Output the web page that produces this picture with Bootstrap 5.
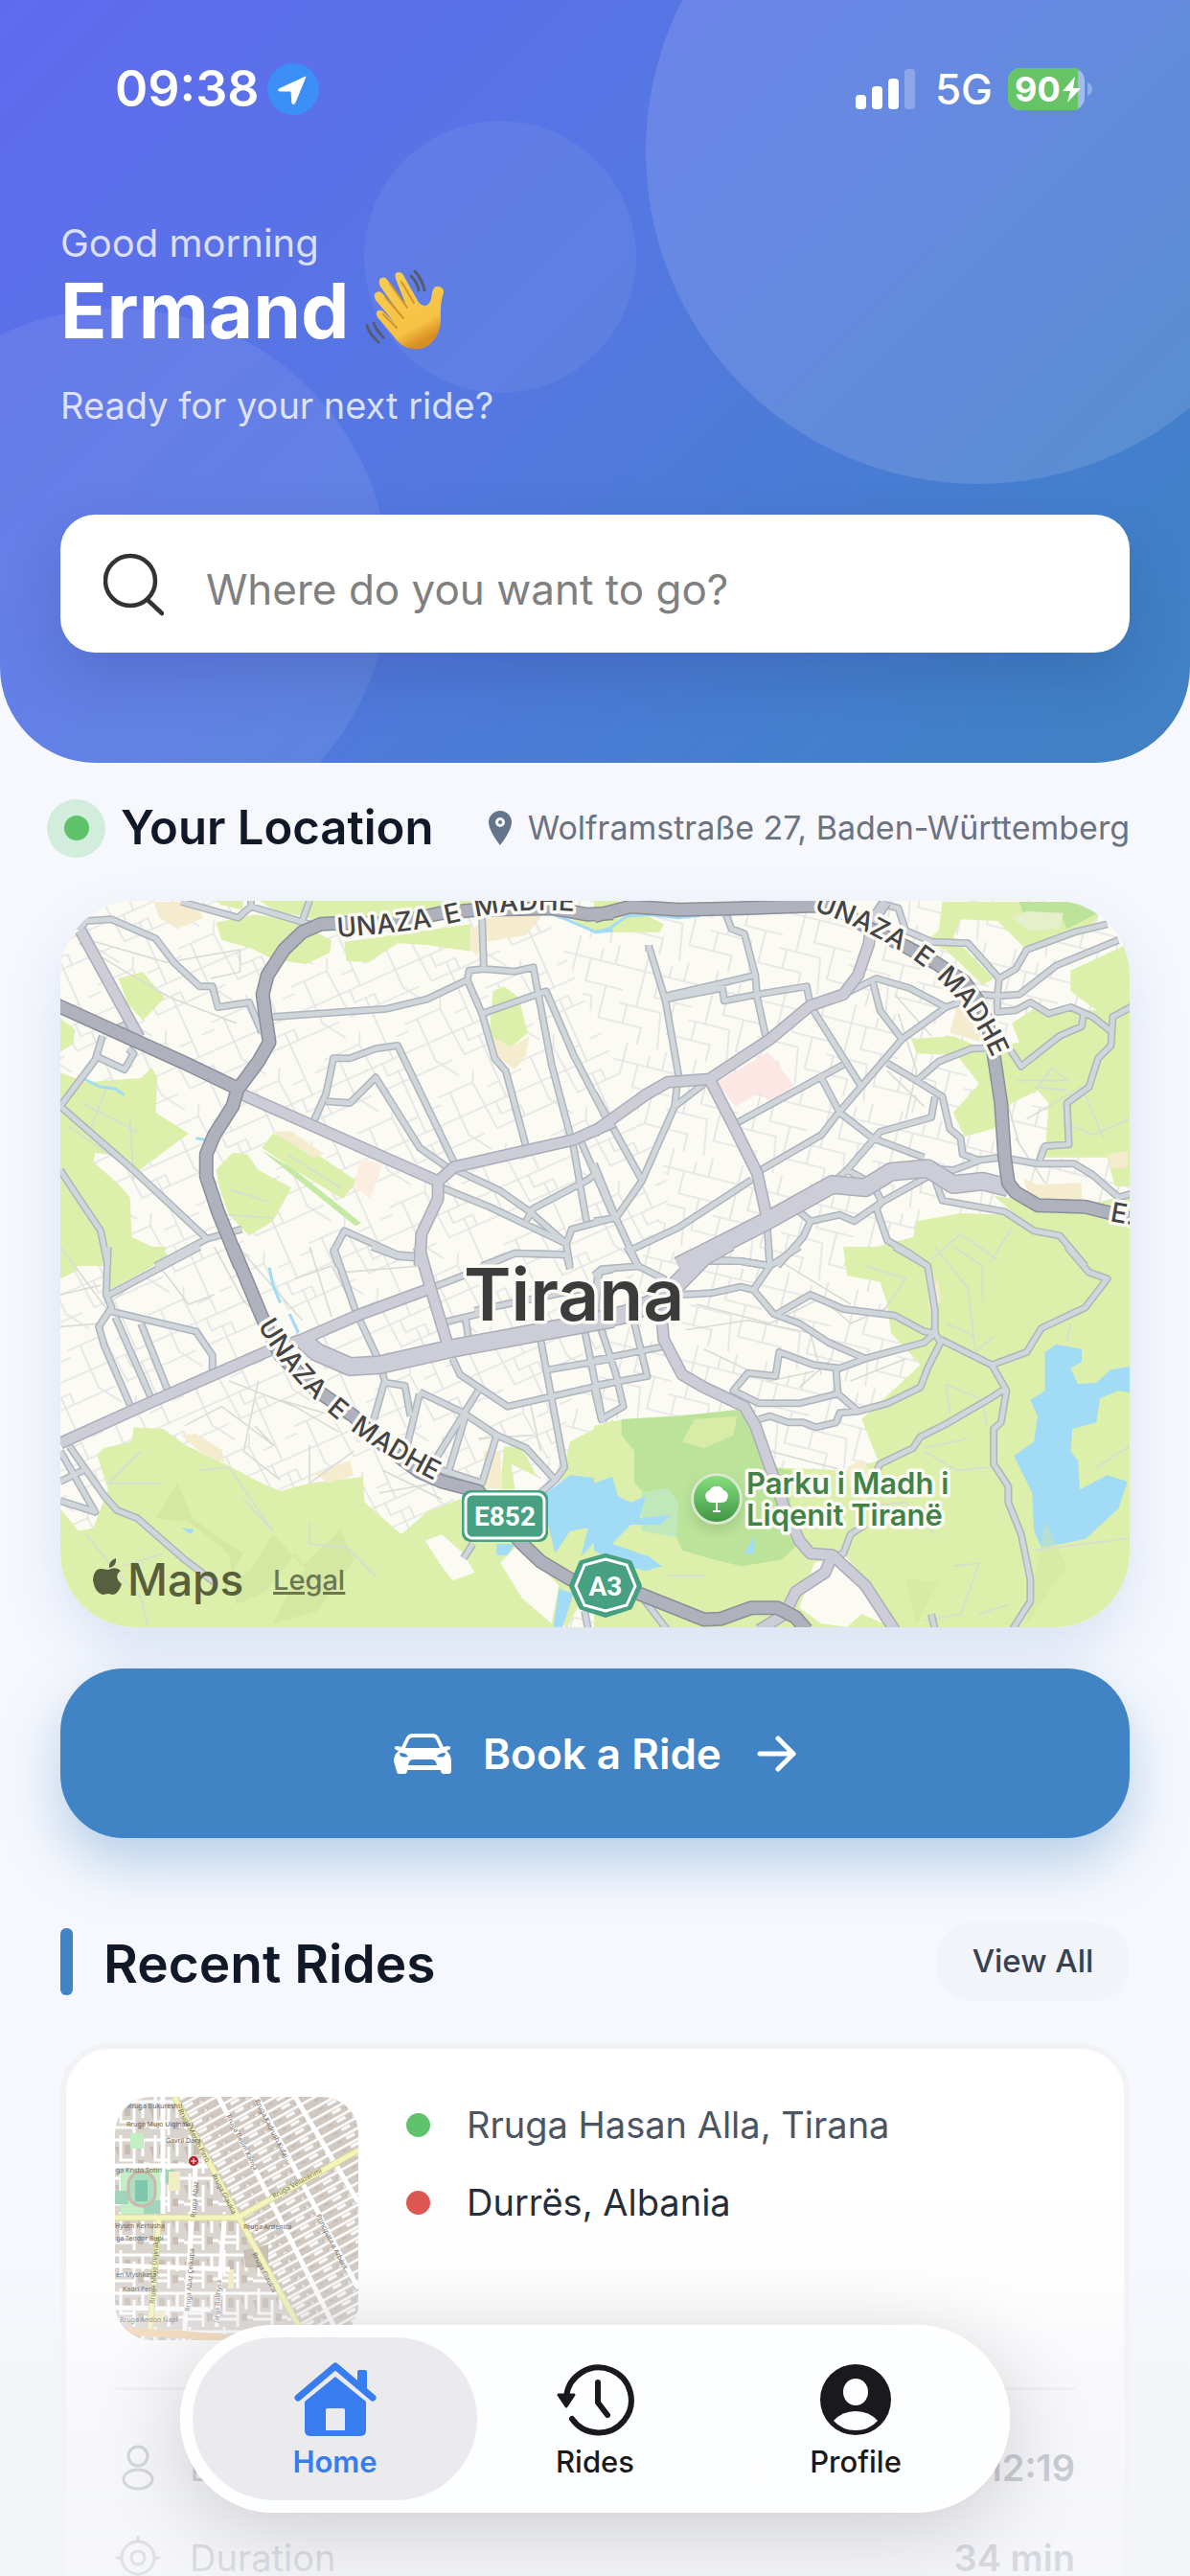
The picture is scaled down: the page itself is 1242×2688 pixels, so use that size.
<!DOCTYPE html>
<html lang="en">
<head>
<meta charset="utf-8">
<meta name="viewport" content="width=device-width, initial-scale=1">
<title>Home</title>
<link href="https://cdn.jsdelivr.net/npm/bootstrap@5.3.0/dist/css/bootstrap.min.css" rel="stylesheet">
<style>
body{font-family:Inter,"Liberation Sans",sans-serif;background:#f7f8fd;color:#111827}
.app{height:100vh;min-height:1400px;overflow:hidden;position:relative}
.gutter{padding-left:63px;padding-right:63px}
.hero{height:796px;border-radius:0 0 100px 100px;background:linear-gradient(135deg,#606aee 0%,#5478e2 45%,#4180c8 88%,#4181c2 100%);overflow:hidden;position:relative;color:#fff}
.orb{position:absolute;border-radius:50%;background:rgba(255,255,255,.1)}
.orb-a{width:694px;height:694px;right:-126px;top:-189px;background:rgba(255,255,255,.12)}
.orb-b{width:284px;height:284px;left:380px;top:126px;background:rgba(255,255,255,.06)}
.orb-c{width:568px;height:568px;left:-162px;top:322px;background:rgba(255,255,255,.08)}
.hero-body{position:relative}
.status{height:186px;padding:0 102px 0 120px}
.clock{font-size:52px;font-weight:600}
.net{font-size:44px;font-weight:500}
.greet{font-size:40px;line-height:48px;margin-top:44px;color:rgba(255,255,255,.78)}
.hero-name{font-size:80px;line-height:92px;font-weight:700;gap:18px}
.ready{font-size:38px;line-height:48px;margin-top:29px;color:rgba(255,255,255,.78)}
.search{height:144px;margin-top:90px;border-radius:36px;background:#fff;padding:0 45px;gap:42px;box-shadow:0 24px 60px rgba(30,40,90,.18)}
.search input{border:0;outline:0;background:transparent;font-size:44px;color:#333;height:100px;margin-top:12px}
.search input::placeholder{color:#808080;opacity:1}
.search svg{margin-top:2px}
.loc-row{height:136px;margin-left:-14px}
.halo{width:61px;height:61px;border-radius:50%;background:#d3eddd}
.halo i{width:26px;height:26px;border-radius:50%;background:#5fc36b}
.title-a{font-size:49px;font-weight:600;line-height:60px}
.address{font-size:34px;color:#6b7280;line-height:44px}
.map-box{height:758px;margin-top:8px;border-radius:78px;overflow:hidden;background:#fbfaf3}
.map-wrap{box-shadow:0 24px 60px rgba(65,120,190,.16);border-radius:78px}
.map-box svg{width:100%;height:100%;display:block}
.ln path{fill:none;vector-effect:non-scaling-stroke;stroke-linejoin:round;stroke-linecap:butt}
.halo-text{paint-order:stroke;stroke:#fbfaf5;stroke-width:7px;stroke-linejoin:round}
.book{height:177px;margin-top:43px;border:0;border-radius:66px;background:#4184c5;color:#fff;font-size:44px;font-weight:600;gap:33px;box-shadow:0 26px 60px rgba(65,132,197,.36)}
.book:hover{background:#3b7ab8;color:#fff}
.recent{margin-top:88px;height:82px}
.recent .stripe{width:13px;height:70px;border-radius:6px;background:#4184c5}
.title-b{font-size:55px;font-weight:600;line-height:66px;padding-top:3px}
.view-all{height:82px;width:202px;border:0;border-radius:38px;background:#f1f4f8;font-size:33px;font-weight:500;color:#374151}
.ride{margin-top:44px;border:6px solid #f1f3f6;border-radius:52px;background:#fff;padding:50px 51px 120px}
.thumb{width:254px;height:254px;border-radius:38px;overflow:hidden;flex:none}
.thumb svg{width:100%;height:100%;display:block}
.stops{padding-left:50px;padding-top:4px}
.stop{height:50px;margin-bottom:31px;font-size:38px;gap:38px;color:#4b5563}
.stop i{width:25px;height:25px;border-radius:50%;background:#5fc36b}
.stop.to{color:#1f2937}
.stop.to i{background:#dc534d}
.facts{border-top:3px solid #eceef1;margin-top:49px;padding-top:56px}
.fact{height:50px;margin-bottom:44px;font-size:38px;color:#7d8290}
.fact svg{width:50px;margin-right:29px;margin-left:-1px}
.fact strong{font-weight:600;color:#6b7080}
.fade-veil{position:absolute;left:0;right:0;bottom:0;height:460px;pointer-events:none;background:linear-gradient(rgba(243,244,248,0) 0%,rgba(243,244,248,.05) 30%,rgba(243,244,248,.6) 55%,rgba(243,244,248,.82) 100%)}
.tabs{position:absolute;bottom:66px;left:50%;transform:translateX(-50%);width:866px;height:196px;border-radius:98px;background:rgba(253,254,255,.97);border:3px solid #fff;box-shadow:0 18px 90px rgba(0,0,0,.17);padding:10px}
.tab{flex:0 0 272px;height:170px;border-radius:85px;color:#1a1a1c;text-decoration:none;font-size:31px;font-weight:500;line-height:40px;padding-top:5px;gap:6px}
.tab.on{background:#ebebed;color:#377df0;font-weight:600;flex:0 0 297px;margin-right:-13px}
</style>
</head>
<body>
<div class="app">
<header class="hero">
  <div class="orb orb-a"></div><div class="orb orb-b"></div><div class="orb orb-c"></div>
  <div class="hero-body">
    <div class="status d-flex align-items-center justify-content-between">
      <div class="d-flex align-items-center gap-2"><span class="clock">09:38</span>
        <svg width="54" height="54" viewBox="0 0 54 54"><circle cx="27" cy="27" r="27" fill="#3c8ff6"/><path d="M40 14 12 27q-1 2 1 2h12l1 13q2 2 3-1z" fill="#fff" stroke="#fff" stroke-width="1" stroke-linejoin="round"/></svg></div>
      <div class="d-flex align-items-center gap-3">
        <svg class="me-1" width="63" height="42" viewBox="0 0 63 42" fill="#fff"><rect y="27" width="11" height="15" rx="4"/><rect x="17" y="18" width="11" height="24" rx="4"/><rect x="34" y="10" width="11" height="32" rx="4"/><rect x="51" width="11" height="42" rx="4" opacity=".25"/></svg>
        <span class="net">5G</span>
        <svg width="88" height="44" viewBox="0 0 88 44"><rect width="80" height="44" rx="13" fill="#a3bde8"/><path d="M13 0H73V44H13A13 13 0 0 1 0 31V13A13 13 0 0 1 13 0z" fill="#66c466"/><path d="M83 15q5 2 5 7t-5 7z" fill="#8fb0e4"/><text x="7" y="35" font-size="36" font-weight="700" fill="#fff">90</text><path d="M70 9 57 24h8l-3 12L76 21h-8z" fill="#fff"/></svg>
      </div>
    </div>
    <div class="gutter">
      <div class="greet">Good morning</div>
      <div class="hero-name d-flex align-items-center"><span>Ermand</span>
        <svg width="84" height="84" viewBox="0 0 84 84"><defs><linearGradient id="skin" x1="0" y1="0" x2=".5" y2="1"><stop offset="0" stop-color="#f8cd55"/><stop offset=".8" stop-color="#f6c343"/><stop offset="1" stop-color="#d98e24"/></linearGradient></defs>
        <path d="M28 68 12 49q-3-5 1-7 4-1 7 3l10 10L10 31q-3-6 1-8 4-2 7 2l17 20L15 17q-3-7 1-9 4-2 7 3l19 26L31 9q-2-7 3-7 4 0 6 5l14 25q3 5 8 5 4-1 6-7 1-15 8-13 5 1 5 6-4 12-3 27 0 17-10 26-9 8-20 6-11-1-20-14z" fill="url(#skin)"/>
        <path d="m20 28 19 22M25 14l18 25M37 12l13 22M18 46l14 14" stroke="#cf962d" stroke-width="2" fill="none" stroke-linecap="round"/><path d="M51 1q8 9 10 20M47 6q7 7 8 15M8 55q3 8 10 15M1 58q3 9 12 17" stroke="#555b70" stroke-width="3" fill="none" stroke-linecap="round"/></svg></div>
      <div class="ready">Ready for your next ride?</div>
      <label class="search d-flex align-items-center" for="dest">
        <svg width="63" height="66" viewBox="0 0 63 66" fill="none" stroke="#333" stroke-width="4.5" stroke-linecap="round"><circle cx="28" cy="29" r="26"/><path d="m46 49 15 14"/></svg>
        <input class="flex-grow-1" id="dest" type="text" placeholder="Where do you want to go?" aria-label="Where do you want to go?">
      </label>
    </div>
  </div>
</header>
<main class="gutter">
  <div class="loc-row d-flex justify-content-between align-items-center">
    <div class="d-flex align-items-center">
      <span class="halo d-flex align-items-center justify-content-center"><i></i></span>
      <span class="title-a ps-3">Your Location</span>
    </div>
    <div class="d-flex align-items-center gap-3">
      <svg width="26" height="36" viewBox="0 0 26 36"><path d="M13 0A12 12 0 0 0 1 12c0 9 12 24 12 24s12-15 12-24A12 12 0 0 0 13 0zm0 17a5 5 0 1 1 0-10 5 5 0 0 1 0 10z" fill="#64748b"/><circle cx="13" cy="12" r="2" fill="#64748b"/></svg>
      <span class="address">Wolframstraße 27, Baden-Württemberg</span>
    </div>
  </div>
  <div class="map-wrap"><div class="map-box">
  <svg viewBox="0 0 1116 758" preserveAspectRatio="xMidYMid slice" role="img" aria-label="Map of Tirana">
  <defs>
    <pattern id="st1" width="92" height="84" patternUnits="userSpaceOnUse" patternTransform="rotate(-24)"><path d="M0 12H40L46 0M0 40H92M14 12V60L30 84M40 12 44 66H92M66 0V40M66 54V84M0 66H30M78 20H92M52 22H66M54 40V54H76V66" fill="none" stroke="#e3e3e5" stroke-width="1.6"/></pattern>
    <pattern id="st2" width="74" height="96" patternUnits="userSpaceOnUse" patternTransform="rotate(14)"><path d="M0 20H74M0 58H44L50 96M18 0V58M34 20V44H74M56 44V78H74M0 78H28V96M60 0V20M8 58V78M44 8V20" fill="none" stroke="#e3e3e5" stroke-width="1.6"/></pattern>
    <linearGradient id="pk" x1="0" y1="0" x2="0" y2="1"><stop stop-color="#86df7c"/><stop offset="1" stop-color="#429545"/></linearGradient>
    <filter id="soft" x="-20%" y="-20%" width="140%" height="140%"><feGaussianBlur stdDeviation="9"/></filter>
  </defs>
  <rect width="1116" height="758" fill="#fbfaf3"/>
  <path d="M0 0H500L640 300 430 758H0z" fill="url(#st1)"/><path d="M500 0H1116V758H430L640 300z" fill="url(#st2)"/>
  <!-- green, sand and water areas -->
  <g transform="translate(-23 -19) scale(.38265 .33333)">
    <path fill="#dcefab" d="M480 55H560L555 85 500 70zM600 55H1180V100L1060 125 960 130 780 125 720 105 650 90zM485 125 590 100 680 115 730 140 800 180 795 220 730 255 640 240 580 205 500 180zM835 185 1180 130V215L1060 195 980 190 900 250 840 245zM218 300 285 280 345 360 285 432 245 380zM60 425 100 460 95 505 60 530zM60 595 130 625 280 612 310 580 325 610 320 720 410 785 270 905 235 860 155 845 150 875 215 940 250 985 255 1110 350 1160 330 1200H60zM485 900 530 845 570 850 600 900 690 955 640 1060 575 1105 520 1040 495 960zM610 830 640 785 760 850 870 935 830 990 700 900zM1240 340 1270 325 1310 360 1335 470 1290 515 1230 480zM1450 110H1568V155L1500 145z"/>
    <path fill="#f5ecd0" d="M315 60H430L450 110 380 145 330 110zM640 780 690 778 780 850 750 860zM1180 150 1225 110 1380 95 1330 165 1220 185 1195 230 1175 200zM1230 480 1290 515 1340 480 1330 540 1300 585 1255 550z"/>
    <path fill="#fbeee1" d="M880 865 940 880 905 990 860 945z"/><path fill="#c4e9a2" d="M605 835 700 900 880 1065 865 1075 730 950z"/>
  </g>
  <g transform="translate(557 -19) scale(.38265 .33333)">
    <path fill="#dcefab" d="M0 55H60L190 130 180 155 0 155zM950 60H1400L1360 130 1180 210 1100 120 1000 115 980 170 1090 300 1060 320 960 210 900 190 940 150zM1300 275 1480 180V950L1420 950 1400 860 1230 860 1240 690 1210 650 1140 690 1090 770 1010 795 980 720 1050 630 990 540 880 535 865 490 980 480 1060 520 1160 500 1140 440 1200 395 1370 400 1300 340zM1380 1000 1480 970V1200H680L690 1165 870 1110 880 1060 1000 1035 1150 1040 1090 980 1200 1000z"/>
    <path fill="#bce39a" d="M1160 60H1300L1400 80 1290 145 1270 95H1170z"/><path fill="#e6efcb" d="M1140 110 1180 90 1280 95 1270 145 1190 150z"/>
    <path fill="#f5ecd0" d="M990 390 1030 380 1060 500 970 470zM1170 925 1210 945 1330 940V990L1190 990zM1400 850 1455 840V890L1410 895z"/>
    <path fill="#fce7e5" d="M335 625 475 530 545 635 480 685 450 660 385 700z"/>
  </g>
  <g transform="translate(-23 361) scale(.38265 .33333)">
    <path fill="#dcefab" d="M60 0H110L105 75 60 100zM195 0H350L330 50 195 135zM260 565 340 570 400 620 510 680 600 735 660 765 740 740 885 720 890 800 990 900 1060 830 1150 790 1280 850 1420 1060 1420 1200H60V820L110 890 150 880 190 760 160 650 180 630 255 610zM1270 625 1320 630 1360 720 1290 680 1300 760 1260 760zM1450 610 1568 540V900L1440 1200 1360 1000 1300 920 1400 860z"/>
    <path fill="#cde19b" opacity=".5" d="M380 740 420 850 480 900 560 960 500 1080 580 1010 640 900 720 1000 830 880 790 1100 700 960 620 1080 540 1120 520 960 410 860 320 850zM700 1040 830 900 860 980 760 1140 640 1180z"/>
    <path fill="#fbfaf3" d="M1055 920 1100 900 1160 960 1190 1020 1130 1045 1100 1000zM1260 990 1310 930 1420 1060 1400 1180 1320 1100z"/>
    <path fill="#f5ecd0" d="M390 590 430 585 500 635 510 675 450 650zM755 710 850 670 860 715 790 740zM1215 640 1260 640 1265 760 1215 755z"/>
    <path fill="#a2dbf5" d="M1385 770 1450 715 1568 730V960L1520 920 1480 970 1500 880 1450 890 1410 960 1390 870zM1250 930H1300L1280 965H1250zM1420 1070 1460 1085 1430 1190H1405zM390 880 425 885 415 900z"/>
  </g>
  <g transform="translate(557 361) scale(.38265 .33333)">
    <path fill="#dcefab" d="M680 0H1480V1200H540L640 1140 580 1100 640 1050 690 1040 740 1080 800 1200H0V560L80 540 330 520 410 510 470 690 690 700 775 670 730 540 890 370 810 270 800 180 780 110 690 90z"/>
    <path fill="#fbfaf3" d="M600 990 680 960 780 1100 820 1195 730 1150 690 1190 620 1180 560 1130z"/>
    <path fill="#bce39a" d="M75 540 230 530 390 510 440 560 490 690 540 700 530 900 550 940 510 980 400 1000 330 980 240 950 200 840 110 740 110 640 75 590z"/>
    <path fill="#d8eca8" d="M275 540 390 530 380 590 300 630 240 610z"/><path fill="#c1e8ba" d="M130 770 200 755 230 800 225 910 130 890z"/>
    <path fill="#a2dbf5" d="M0 740 50 720 65 780 100 800 140 780 125 850 210 840 180 870 100 870 50 930 150 970 185 1000 140 1015 50 985 0 950zM1230 330 1260 305 1330 320 1330 360 1300 380 1320 430 1370 425 1410 385 1480 370V460L1430 450 1380 475 1370 550 1305 570 1300 640 1320 670 1325 760 1400 715 1455 735 1430 820 1340 915 1220 942 1200 890 1195 770 1145 655 1200 610 1210 530 1190 480 1230 450zM410 960 440 900 435 960z"/>
    <path fill="#f5ecd0" d="M690 690 730 665 750 700 740 800 700 760zM905 100 940 110 945 170 915 200z"/>
    <path d="M1230 860 1180 1180 1290 1000zM850 1040 880 1180 940 1050z" fill="#d1e69f" opacity=".4"/>
  </g>
  <g class="ln" stroke="#d9dbd6" stroke-width="1.6">
    <g transform="translate(-23 361) scale(.38265 .33333)"><path d="M60 0 190 200M60 150 170 120M60 250 170 240M210 160 330 60 410 180 480 150M480 0 560 170 640 250M560 20 720 230M700 100 800 60 870 210M740 0 800 220M830 80 1040 60M600 420 560 640 660 730M520 420 700 500 820 580M400 560 500 500 640 620 590 560M740 620 740 740 860 640M660 480 900 560M440 700 520 690 640 890 560 790M230 1000 340 960M740 860 740 930 840 940 920 1030M940 700 1100 790M930 770 1080 740M1200 600 1350 590M1340 480 1370 640M280 640 190 740 330 740M130 900 200 1000 280 1100 300 1190"/></g>
    <g transform="translate(557 361) scale(.38265 .33333)"><path d="M280 180 480 240 620 160 700 240 800 190M250 260 420 230 590 270 620 400M300 320 480 420 600 390M560 440 650 350M700 420 850 350M500 40 700 180M930 0 1020 130 1040 330 1090 280M960 240 1040 280M1060 170 1060 60 980 0M740 60 850 100 790 200M900 630 1020 600M900 640 990 700 1080 690M970 520 960 430 1060 480 1070 560M700 820 850 800 930 900M480 640 680 700M1200 950 1480 910M1290 290 1300 240M1370 690 1480 610M200 1030 300 1030M980 1000 1050 990 1000 1150 900 1170M1050 1150 1130 1120"/></g>
    <g transform="translate(557 -19) scale(.38265 .33333)"><path d="M1180 740 1330 640 1390 800M1200 640 1290 650M1120 660 1160 820M1150 620 1290 620 1250 580 1210 640M1300 760 1360 790 1480 730M1140 1080 1080 1190M920 1180 1000 1100 1100 1180M820 350 920 480M830 410 880 590 850 740M800 590 900 700M1150 800 1230 940"/></g>
    <g transform="translate(-23 -19) scale(.38265 .33333)"><path d="M120 690 270 780M190 630 140 780M80 760 230 880M250 740 260 930M520 960 630 1000M510 1040 640 1050M680 850 830 960M110 190 240 280 360 360 540 440M110 170 350 250 550 210 550 280 470 300"/></g>
  </g>
  <g class="ln" fill="none" stroke="#a2dbf5" stroke-width="3"><g transform="translate(-23 -19) scale(.38265 .33333)"><path d="M125 615 170 640 210 645 235 665M430 800 455 805M1390 95 1440 115 1520 155 1568 150"/></g><g transform="translate(557 -19) scale(.38265 .33333)"><path d="M0 155 40 145 90 105 150 100 230 110 290 103M385 95 480 90"/></g><g transform="translate(-23 361) scale(.38265 .33333)"><path d="M630 65 640 120 660 175M685 210 710 270"/></g></g>
  <!-- roads: each set is drawn as a casing and again as a narrower fill -->
  <defs>
    <g id="minor" class="ln">
      <g transform="translate(-23 -19) scale(.38265 .33333)"><path d="M390 60 545 110 580 75 740 130M580 55V75M740 55 720 120M110 150 130 120 200 115 320 175 370 250 440 325 475 325 490 390 575 375 610 470M640 420 950 395 1060 365 1170 305 1210 410 1245 550 1275 590 1330 825M1210 100 1215 270 1175 275 1170 305M1215 270 1300 278 1350 265 1400 570 1460 830 1495 1060M1210 410 1385 340 1460 540 1555 750M175 480 155 555 60 700 250 890 460 1115 320 1200M460 1115 555 1085M160 545 235 585 260 535 245 520M215 455 250 440M60 900 100 970 170 1090 190 1200M750 750 785 660 805 550 850 550 920 520 980 510 1140 890M785 685 850 690 920 610 1040 830 1120 895M1140 900 1260 965 1340 1030 1440 1130M1100 955 1230 1015 1440 1130 1455 1085 1568 1050M1330 1060 1350 1020 1500 930 1525 905M1480 810 1568 1040M1210 1200 1300 1160 1440 1165M1440 1130 1450 1200M820 1200 805 1155 835 1090 980 1165 1040 1170"/></g>
      <g transform="translate(557 -19) scale(.38265 .33333)"><path d="M150 200 195 370 230 600 220 700 130 935 60 1050 0 1060M300 630 220 700M0 660 130 930M0 880 60 1050 120 1200M150 195V215M360 100 375 145 410 160 440 290 445 360 470 490M195 355 440 290M195 365 350 330 355 370 445 350 580 325 590 385 730 640M385 755 680 570M615 600 670 720 760 800 900 860M680 350 770 300 860 330 960 390 840 490 660 730 620 790 440 910M760 310 780 400 840 490M960 390 1060 350 1100 355M800 565 880 620 950 670 970 770 1000 800 1005 850 1050 870 980 900 910 895M880 620 940 560 1030 520 1130 515 1165 575 1270 480 1330 450 1335 410M930 670 920 735 780 780 690 900 740 930M690 900 660 930M1040 870 1110 860 1210 880 1310 880 1360 915 1430 985 1480 970M1215 870 1230 825 1295 820 1290 690 1350 640 1375 550 1410 510 1415 420 1480 380M1100 355 1100 405 1150 400 1190 375 1240 410 1300 390 1360 420 1415 470M1100 355 1160 350 1260 260 1430 180M1400 130 1310 155 1180 210 1150 270 1105 300 1100 355M1105 300 1020 190 920 185 850 150 830 80 780 65M770 965 785 1000 910 920M560 1030 590 1060 670 1040 710 1060 785 1000 770 1020 800 1120 860 1160 910 1200M590 1060 570 1110 500 1200M930 930 950 995 1120 1030 1200 1090 1270 1105 1340 1200M430 930 230 1080 100 1150M470 1040 480 1200M320 1180 400 1185 480 1200"/></g>
      <g transform="translate(-23 361) scale(.38265 .33333)"><path d="M190 0 185 150 200 190 165 250 180 310 250 495M185 155 440 0M190 200 430 265 475 340 475 395M210 220 310 480M280 240 355 455M805 0 865 200 930 360 945 420 915 540M910 0 980 30 1035 35M1080 125 1160 90 1300 20 1440 25 1450 70M945 425 1000 435 1015 530M1040 460 1000 650M1040 455 1160 520 1250 590 1330 630 1410 730 1370 770M1200 450 1070 690M1165 530 1120 700M1250 590 1210 740 1090 695M1130 350 1150 400 1280 500 1568 425M1370 290 1435 690 1410 730M1390 385 1568 350M1490 260 1540 550M1110 235 1220 205M1165 220 1175 300M1190 200 1490 130M1520 200 1530 80 1568 70M85 625 180 780 215 825 270 850 400 980 480 1050M60 640 155 830 60 795M60 735 130 695M1185 930 1160 975M1490 1140 1500 1200"/></g>
      <g transform="translate(557 361) scale(.38265 .33333)"><path d="M90 0 120 60 190 100 190 220M0 90 20 70 130 60M10 90 0 190 60 400 80 500 20 540 0 440M110 240 145 405 0 435M0 355 200 310M300 45 400 45 480 60 560 0M475 0 480 60 435 135 490 210 560 240 640 300 740 350M240 150 320 145 400 125 435 135M500 210 590 150 680 195 820 215 900 265 930 270 900 300 740 350 670 380 600 370 505 330 495 405 420 395 380 450 450 490 560 490 665 460 660 380M665 460 720 515 800 490 890 440 910 380 945 300 930 270 930 200 910 60 820 0M945 290 1085 370 1180 330 1220 255 1340 190 1400 100 1350 80 1290 0M1085 370 1125 450 1110 550 1090 570 1090 680 1130 750 1130 800 1165 900 1190 1040 1190 1110 1140 1200M1120 445 1080 475 960 555 890 595 870 630 780 680 740 780M450 540 480 530 530 550 570 550 605 565 660 550 670 520 720 515M740 870 700 900 680 960 650 970M120 1080 200 1200M920 1150 930 1200"/></g>
    </g>
    <g id="major" class="ln">
      <g transform="translate(-23 -19) scale(.38265 .33333)"><path d="M115 150 275 485M560 665 1090 935 1135 890 1460 805 1568 750M1090 935 1090 990 1045 1100 1040 1200"/></g>
      <g transform="translate(557 -19) scale(.38265 .33333)"><path d="M0 780 140 665 200 625 315 615 480 490 590 385 680 350 720 290 750 190 755 130 795 60M315 615 380 760 445 910 470 1040"/></g>
      <g transform="translate(-23 361) scale(.38265 .33333)"><path d="M60 615 300 490 480 400 640 320 720 290 870 215 1070 130M1038 0 1070 130 1115 300"/></g>
      <g transform="translate(557 361) scale(.38265 .33333)"><path d="M185 230 190 290 240 400 300 440 410 500 440 560 480 690 520 820 560 920 590 960 650 965 740 1060 820 1200M650 965 630 1020 550 1080 520 1150 450 1200"/></g>
    </g>
    <g id="avenue" class="ln">
      <g transform="translate(557 -19) scale(.38265 .33333)"><path d="M230 1200 300 1160 470 1060 650 945 740 955 810 905 910 895 980 945 1060 935 1130 955"/></g>
      <g transform="translate(-23 361) scale(.38265 .33333)"><path d="M720 290 760 330 850 375 930 370 1120 320 1400 260 1568 225"/></g>
      <g transform="translate(557 361) scale(.38265 .33333)"><path d="M0 233 90 210 190 160 240 100 300 30 370 -15"/></g>
    </g>
    <g id="ring" class="ln">
      <g transform="translate(-23 -19) scale(.38265 .33333)"><path d="M50 383 400 565 545 645 600 560 630 500 620 420 612 350 625 290 670 210 720 155 770 130 850 125 960 130 1100 95 1200 85 1400 80 1500 100 1568 95M545 640 530 700 480 790 458 850 458 920 490 1030 550 1200"/></g>
      <g transform="translate(557 -19) scale(.38265 .33333)"><path d="M0 105 100 75 230 85 400 80 600 72 660 80 760 150 850 200 930 250 1010 310 1060 390 1085 500 1110 690 1120 860 1130 940 1150 970 1210 1010 1340 1015 1410 1035 1480 1060"/></g>
      <g transform="translate(-23 361) scale(.38265 .33333)"><path d="M530 0 610 220 660 340 760 450 860 530 940 620 1040 705 1100 735 1200 765 1260 850 1320 930 1370 985 1450 1040 1568 1075"/></g>
      <g transform="translate(557 361) scale(.38265 .33333)"><path d="M0 1050 110 1080 300 1167 345 1165 430 1130 500 1130 550 1160 580 1200"/></g>
    </g>
  </defs>
  <use href="#minor" stroke="#aeb5bf" stroke-width="8"/><use href="#minor" stroke="#d0d6d9" stroke-width="5"/>
  <use href="#major" stroke="#abadb9" stroke-width="13"/><use href="#avenue" stroke="#abadb9" stroke-width="20"/>
  <use href="#major" stroke="#cccdd7" stroke-width="10"/><use href="#avenue" stroke="#cccdd7" stroke-width="17"/>
  <use href="#ring" stroke="#8b8e99" stroke-width="15"/><use href="#ring" stroke="#afb2bc" stroke-width="12"/>
  <!-- labels -->
  <defs><path id="t1" d="M289 38Q380 32 430 18T570 14"/><path id="t2" d="M786 10Q900 50 945 115T982 220"/><path id="t3" d="M206 443Q240 505 300 550T450 632"/></defs>
  <g font-size="28" font-weight="500" fill="#444" class="halo-text">
    <text><textPath href="#t1">UNAZA&#160; E &#160;MADHE</textPath></text><text><textPath href="#t2">UNAZA&#160; E &#160;MADHE</textPath></text><text><textPath href="#t3">UNAZA&#160; E &#160;MADHE</textPath></text>
    <text transform="translate(1095 334) rotate(10)">E.</text>
  </g>
  <text x="421" y="438" font-size="75" font-weight="600" fill="#3c3c3c" class="halo-text">Tirana</text>
  <g><rect x="419" y="615" width="90" height="54" rx="9" fill="#48a082"/><rect x="423" y="619" width="82" height="46" rx="7" fill="none" stroke="#fff" stroke-width="3"/><text x="464" y="652" font-family="Roboto" font-size="28" font-weight="700" fill="#fff" text-anchor="middle">E852</text></g>
  <g><path d="M569 684 594 691 604 715 594 737 569 745 544 737 534 715 544 691z" fill="#48a082" stroke="#48a082" stroke-width="6" stroke-linejoin="round"/><path d="M569 687 591 693 600 715 591 735 569 741 547 735 538 715 547 693z" fill="none" stroke="#fff" stroke-width="3"/><text x="569" y="725" font-family="Roboto" font-size="28" font-weight="700" fill="#fff" text-anchor="middle">A3</text></g>
  <circle cx="685" cy="630" r="24" fill="#5a7a3a" opacity=".35" filter="url(#soft)"/><circle cx="685" cy="624" r="27" fill="#d9e8cf"/><circle cx="685" cy="624" r="24" fill="url(#pk)"/>
  <path d="M685 611a6 6 0 0 1 7 4 6 6 0 0 1 4 9q-1 4-7 4h-3v8h3v2h-8v-2h3v-8h-3q-6 0-7-4a6 6 0 0 1 4-9 6 6 0 0 1 7-4z" fill="#fff"/>
  <g font-size="31" font-weight="600" fill="#418346" class="halo-text"><text x="716" y="619">Parku i Madh i</text><text x="716" y="652">Liqenit Tiranë</text></g>
  <path d="M58 686q1 8-7 10-1-7 7-10zM50 698q8-4 13 1-8 6 1 14-4 11-9 11l-5-1-6 1q-8-2-10-15 1-13 9-12z" fill="#575f3e"/>
  <text x="70" y="725" font-size="46" fill="#575f3e" font-weight="500">Maps</text>
  <a href="#legal"><text x="222" y="719" font-size="29" font-weight="500" fill="#6d7650" text-decoration="underline">Legal</text></a>
  </svg></div></div>
  <button class="book btn w-100 d-flex align-items-center justify-content-center" type="button">
    <svg width="60" height="42" viewBox="0 0 60 42"><path d="M13 4Q15 0 20 0H40q5 0 7 4l5 10 4-1q4 0 3 3l-4 2q5 4 5 11V39q0 3-3 3h-5q-3 0-3-4H14q0 4-3 4H6q-3 0-3-3L0 29q0-7 5-11l-4-2q-1-3 3-3l4 1zm3 2-4 9H48L44 6q-1-2-4-2H20q-3 0-4 2zM6 20q0 6 9 4-2-4-9-4zm48 0q-7 0-9 4 9 2 9-4zM20 27q-4 0-5 6H45q-1-6-5-6z" fill="#fff" fill-rule="evenodd"/></svg>
    <span>Book a Ride</span>
    <svg class="ms-1" width="41" height="40" viewBox="0 0 41 40" fill="none" stroke="#fff" stroke-width="5" stroke-linecap="round" stroke-linejoin="round"><path d="M3 20H38M22 4 38 20 22 36"/></svg>
  </button>
  <div class="recent d-flex align-items-center justify-content-between">
    <div class="d-flex align-items-center"><span class="stripe"></span><span class="title-b ps-4 ms-2">Recent Rides</span></div>
    <button class="view-all btn p-0" type="button">View All</button>
  </div>
  <section class="ride">
    <div class="d-flex">
      <div class="thumb">
        <svg viewBox="0 0 254 254" role="img" aria-label="Ride start">
        <defs><pattern id="h1" width="44" height="10" patternUnits="userSpaceOnUse" patternTransform="rotate(-29)"><rect width="44" height="10" fill="#d0c8c1"/><path d="M0 1H44M14 5H24M32 6V9" stroke="#fff" stroke-width="3"/><path d="M4 5H9M28 7H36" stroke="#b9aea4"/></pattern>
        <pattern id="h2" width="36" height="40" patternUnits="userSpaceOnUse"><rect width="36" height="40" fill="#d9d3cd"/><path d="M0 5H36M6 0V26H20M20 12V40M0 32H20M29 5V22M28 30H36" fill="none" stroke="#fff" stroke-width="3"/><path d="M10 10H16V20H10zM23 9H26V18M24 26H30V34H24zM0 12H4V24" fill="#c7bcb3"/></pattern></defs>
        <rect width="254" height="254" fill="url(#h2)"/><path d="M62 0H254V254H196L128 124z" fill="url(#h1)"/>
        <path d="M16 38H30V54H16zM6 76H47V122H6z" fill="#c3efc5"/><path d="M0 98H14V112H0zM30 108H48V122H30zM52 76H62V90H52z" fill="#9fd3ba"/><rect x="14" y="78" width="28" height="36" rx="14" fill="#a9dfc0" stroke="#ccb5a9" stroke-width="3"/><rect x="21" y="87" width="13" height="22" fill="#7dc5ac"/><path d="M56 78H68V98H56zM118 180H124V200H118zM42 224H52V234H42z" fill="#f1edc3"/><path d="M134 160 160 154V178H136z" fill="#c8bdb3"/>
        <g stroke="#fff" fill="none" stroke-width="5"><path d="M0 72H100M50 0V122M84 74 72 254M108 0 236 254M148 0 254 200M188 0 254 110M114 128 106 240M0 176 120 180M0 220 100 222"/></g>
        <path d="M0 126H128L254 56M62 0 128 124 200 254M46 126 36 250" fill="none" stroke="#d6d7a0" stroke-width="7"/><path d="M0 126H128L254 56M62 0 128 124 200 254M46 126 36 250" fill="none" stroke="#f3f5b8" stroke-width="5"/><path d="M0 244 70 248 140 254" stroke="#f3cfa2" stroke-width="8" fill="none"/>
        <circle cx="82" cy="67" r="5" fill="#b3202a"/><path d="M79 67h6M82 64v6" stroke="#fff"/>
        <g font-family="Noto Sans" font-size="7" fill="#6b6662"><text x="13" y="12">Rruga Bukureshti</text><text x="12" y="31">Rruga Mujo Ulqinaku</text><text x="53" y="48">Gavril Dara</text><text x="1" y="79">ga Kristo Sotiri</text><text x="0" y="137">Hysen Kertusha</text><text x="1" y="150">ga Teodor Rupi</text><text x="1" y="188">en Myshketa</text><text x="8" y="203">Kadri Peni</text><text x="5" y="235">Rruga Andon Napi</text><text x="134" y="138">Rruga Ardenica</text>
        <text transform="translate(66 14) rotate(62)">Rruga Mersin Pirro</text><text transform="translate(101 82) rotate(62)">Rruga Glaukia</text><text transform="translate(143 164) rotate(62)">Rruga Glaukia</text><text transform="translate(116 20) rotate(63)">Rruga Besim Kamja</text><text transform="translate(146 4) rotate(63)">Rruga Kadrush Kufaj</text><text transform="translate(210 124) rotate(63)">Principata e Arbërit</text><text transform="translate(166 106) rotate(-29)">Rruga Vëllazërimi</text><text transform="translate(41 216) rotate(-86)">Rruga Mujo Ulqinaku</text><text transform="translate(78 224) rotate(-86)">Rruga Abaz Çelkupa</text><text transform="translate(84 126) rotate(-86)">Rruga Abaz</text><text transform="translate(108 236) rotate(-86)">Jahja Ballhysa</text></g>
        </svg>
      </div>
      <div class="stops">
        <div class="stop d-flex align-items-center"><i></i><span>Rruga Hasan Alla, Tirana</span></div>
        <div class="stop to d-flex align-items-center"><i></i><span>Durrës, Albania</span></div>
      </div>
    </div>
    <div class="facts">
      <div class="fact d-flex align-items-center"><svg height="50" viewBox="0 0 50 50" fill="none" stroke="#8e93a0" stroke-width="3"><circle cx="25" cy="13" r="10"/><ellipse cx="25" cy="37" rx="15" ry="10"/></svg><span>Date &amp; Time</span><strong class="ms-auto">12 May 2025, 12:19</strong></div>
      <div class="fact d-flex align-items-center"><svg height="50" viewBox="0 0 50 50" fill="none" stroke="#8e93a0" stroke-width="3"><circle cx="25" cy="25" r="17"/><circle cx="25" cy="25" r="7"/><path d="M25 2V8M25 42V48M2 25H8M42 25H48"/></svg><span>Duration</span><strong class="ms-auto">34 min</strong></div>
    </div>
  </section>
</main>
<div class="fade-veil"></div>
<nav class="tabs d-flex align-items-center">
  <a class="tab on d-flex flex-column align-items-center justify-content-center" href="#home"><svg width="86" height="78" viewBox="0 0 86 78" fill="currentColor"><path d="M4 37 43 4 82 37" fill="none" stroke="currentColor" stroke-width="7" stroke-linecap="round" stroke-linejoin="round"/><path d="M66 10q0-2 2-2h6q2 0 2 2V32L66 23zM43 15 75 41V71q0 6-6 6H17q-6 0-6-6V41zM35 48q-2 0-2 2V71H53V50q0-2-2-2z" fill-rule="evenodd"/></svg><span>Home</span></a>
  <a class="tab d-flex flex-column align-items-center justify-content-center" href="#rides"><svg width="82" height="78" viewBox="0 0 82 78" fill="none" stroke="currentColor" stroke-width="6" stroke-linecap="round" stroke-linejoin="round"><path d="M11 36A34 34 0 1 1 17 59M44 21V42L54 55"/><path d="M3 34H19L11 46z" fill="currentColor" stroke-width="3"/></svg><span>Rides</span></a>
  <a class="tab d-flex flex-column align-items-center justify-content-center" href="#profile"><svg width="76" height="78" viewBox="0 0 76 78"><circle cx="38" cy="39" r="37" fill="currentColor"/><ellipse cx="38" cy="31" rx="13" ry="14" fill="#fdfeff"/><path d="M15 61Q24 51 38 51t23 10Q52 71 38 71T15 61z" fill="#fdfeff"/></svg><span>Profile</span></a>
</nav>
</div>
<script src="https://cdn.jsdelivr.net/npm/bootstrap@5.3.0/dist/js/bootstrap.bundle.min.js"></script>
</body>
</html>
